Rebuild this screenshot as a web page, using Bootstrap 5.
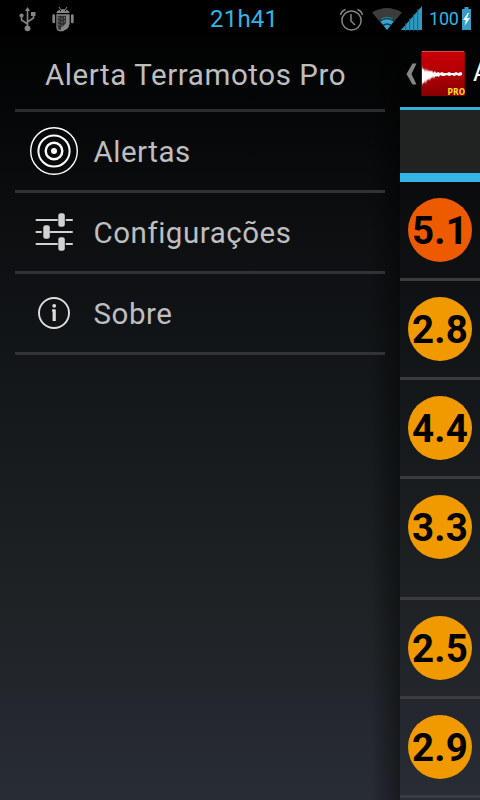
<!DOCTYPE html>
<html lang="pt">
<head>
<meta charset="utf-8">
<meta name="viewport" content="width=device-width, initial-scale=1">
<title>Alerta Terramotos Pro</title>
<link rel="stylesheet" href="https://cdn.jsdelivr.net/npm/bootstrap@5.3.0/dist/css/bootstrap.min.css">
<style>
body{width:480px;height:800px;font-family:Roboto,"Noto Sans",sans-serif;color:#bebebe;background:linear-gradient(#000 0,#020303 60px,#0d0f11 240px,#14181a 400px,#1e2225 600px,#282c34 800px)}
.status-bar{height:38px;background:#000;color:#33b5e5}
.status-bar svg,.drawer svg,.app-bar svg{display:block;flex:none}
.clock{font-size:24px;line-height:40px;letter-spacing:.2px;margin-left:135px;width:70px;white-space:nowrap}
.battery-level{font-size:18px;line-height:40px;width:32px;margin-left:6px;margin-right:1px;letter-spacing:-.2px}
.drawer{width:400px;padding:0 15px;background:linear-gradient(90deg,transparent 370px,rgba(0,0,0,.42) 400px)}
.drawer-title{height:74px;border-bottom:3px solid #2b2d2f;font-size:29.5px;letter-spacing:.58px;line-height:75px;padding-left:30px;white-space:nowrap}
.drawer-item{height:81px;border-bottom:3px solid #303235;font-size:29.5px;letter-spacing:.52px;padding-left:15px}
.drawer-item svg{margin-right:15.5px}
.drawer-item span{padding-top:2px}
.content{width:80px}
.app-bar{height:72px;border-bottom:3px solid #35b0dd;background:#020303;color:#fff;font-size:25px}
.app-bar span{padding-top:1px}
.tab-strip{height:72px;background:#212222;border-bottom:9px solid #33b5e5}
.quake{height:99px;border-bottom:3px solid #3a3c3f;padding:16px 8px;flex:none}
.quake-tall{height:121px}
.magnitude{width:64px;height:64px;background:#f09a00;color:#000;font-size:38.5px;font-weight:700;letter-spacing:.2px;line-height:66px}
.magnitude.strong{background:#ee5a00}
</style>
<script src="https://cdn.jsdelivr.net/npm/bootstrap@5.3.0/dist/js/bootstrap.bundle.min.js"></script>
</head>
<body class="d-flex flex-column overflow-hidden m-0">
<header class="status-bar d-flex align-items-center flex-shrink-0">
  <svg width="75" height="38" fill="none" stroke="#858585" stroke-width="1.600">
    <path d="M27.500 28V10M27.500 24L21.500 20V15M27.500 22L33.500 18V14"/>
    <g fill="#858585" stroke="none"><path d="M27.500 7l2.500 4h-5zM31 12h4.500v4H31z"/><circle cx="21.500" cy="15.500" r="2.100"/><circle cx="27.500" cy="28.300" r="2.900"/></g>
    <path d="M59 7l2 3M67 7l-2 3" stroke-width="1"/>
    <path d="M56.500 13c.3-5 12.700-5 13 0z" fill="#858585" stroke="none"/>
    <path d="M60 10.500h1M65 10.500h1" stroke="#111"/>
    <path d="M53.700 15.500v6.500M72.300 15.500v6.500" stroke-width="2.700" stroke-linecap="round"/>
    <path d="M57 15h12v9l-6 6.500h-4q-2-1-2-3z" fill="#303030" stroke-width="1.300"/>
    <path d="M69 15h-3v8q-2 3-5 4.500v3h3q5-2 5-5z" fill="#858585" stroke="none"/>
    <path d="M59 17v11M62 18v9M64.500 17v7" stroke="#777" stroke-width="1" stroke-dasharray="1.500 2"/>
  </svg>
  <div class="clock">21h41</div>
  <svg width="143" height="38" viewBox="280 0 143 38" fill="none" stroke="#858585" stroke-width="1.500">
    <circle cx="351.500" cy="20.500" r="9.600"/><path d="M351 14v7l4 4M340.500 15q1-4 5-5.500M362.500 15q-1-4-5-5.500"/>
    <path d="M372 12.500q15-9 30 0L387 30z" fill="#3c3c3c" stroke="none"/>
    <path d="M380.500 21.500q6.500-4.500 13 0L387 30z" fill="#33a5d0" stroke="none"/>
    <path d="M380 20.500q7-4.500 14 0M383 25.500q4-3 8 0" stroke="#153844" stroke-width="1.700"/>
    <path d="M381.500 19q5.500-3 11 0" stroke="#318fac" stroke-width="1.200"/>
    <path d="M401 30l21-24v24z" fill="#2f99c2" stroke="none"/>
    <path d="M405.700 23v8M409.700 18v13M413.700 14v17M417.700 9v22" stroke="#1b5e78" stroke-width=".9"/>
  </svg>
  <div class="battery-level">100</div>
  <svg width="9" height="38"><path d="M2.500 7h4v2H9v21H0V9h2.500z" fill="#399cc6"/><path d="M5.800 13L1 20h2.800L2.500 26 8 18H5l2-5z" fill="#e9f7fc"/></svg>
</header>
<main class="d-flex flex-grow-1 overflow-hidden">
  <nav class="drawer flex-shrink-0">
    <div class="drawer-title">Alerta Terramotos Pro</div>
    <div class="drawer-item d-flex align-items-center">
      <svg width="48" height="48" fill="none" stroke="#fff"><circle cx="24" cy="24" r="23.300" stroke-width="1.400"/><circle cx="24" cy="24" r="15.600" stroke-width="2"/><circle cx="24" cy="24" r="8.300" stroke-width="2.400"/><circle cx="24" cy="24" r="3" fill="#fff" stroke="none"/></svg>
      <span>Alertas</span>
    </div>
    <div class="drawer-item d-flex align-items-center">
      <svg width="48" height="48" fill="none" stroke="#d2d2d2" stroke-width="2" stroke-linecap="round"><path d="M6.500 12H27M36.500 12H42M6.500 24H11M20.500 24H42M6.500 36H27M36.500 36H42"/><g fill="#d2d2d2" stroke="none"><rect x="28.300" y="5.300" width="6.500" height="13.400" rx="2.300"/><rect x="13.300" y="17.300" width="6.500" height="13.400" rx="2.300"/><rect x="28.300" y="29.300" width="6.500" height="13.400" rx="2.300"/></g></svg>
      <span>Configurações</span>
    </div>
    <div class="drawer-item d-flex align-items-center">
      <svg width="48" height="48" fill="none" stroke="#dedede"><circle cx="24" cy="24" r="15" stroke-width="1.900"/><path d="M22 21.500h1.500M24 20.500V32" stroke-width="2"/><path d="M24.200 20.500V32" stroke-width="3.200"/><circle cx="24.200" cy="16.800" r="1.900" fill="#dedede" stroke="none"/></svg>
      <span>Sobre</span>
    </div>
  </nav>
  <section class="content d-flex flex-column flex-shrink-0 overflow-hidden">
    <div class="app-bar d-flex align-items-center flex-shrink-0 overflow-hidden">
      <svg width="73" height="69" viewBox="0 0 73 69">
        <defs><linearGradient id="tile" x2="0" y2="1"><stop stop-color="#c90008"/><stop offset=".45" stop-color="#b50005"/><stop offset="1" stop-color="#880002"/></linearGradient></defs>
        <path d="M12.500 25.500h4L11.500 36l5 10.500h-4L6.500 36z" fill="#868686"/>
        <rect x="21.300" y="13" width="43.500" height="45" rx="1" fill="url(#tile)"/>
        <path d="M22 13.500h42" stroke="#df4b50"/>
        <path d="M22 28l1 4 1-2 1 4 1-4 1 4 1-3 1 3 1-2 1 2 1-2 1 3 2-2 1 2 2-1 2 1 2-1 2 1h3l2-1 2 1h3l2-1 2 1 3-1 1 1v2l-3 1-2-1-3 1-2-1-3 1-2-1-3 1h-2l-2-1-1 2-2-1-1 1-1-1-1 3-1-3-1 3-1-2-1 4-1-3-1 3-1-2-1 5-1-4-1 4-1-2-1 4z" fill="#fff"/>
        <text x="47.500" y="56.600" font-family="DejaVu Sans,sans-serif" font-size="8" font-weight="700" textLength="17.500" lengthAdjust="spacingAndGlyphs" fill="#ffdc16">PRO</text>
      </svg>
      <span>A</span>
    </div>
    <div class="tab-strip flex-shrink-0"></div>
    <div class="quake"><div class="magnitude strong rounded-circle text-center">5.1</div></div>
    <div class="quake"><div class="magnitude rounded-circle text-center">2.8</div></div>
    <div class="quake"><div class="magnitude rounded-circle text-center">4.4</div></div>
    <div class="quake quake-tall"><div class="magnitude rounded-circle text-center">3.3</div></div>
    <div class="quake"><div class="magnitude rounded-circle text-center">2.5</div></div>
    <div class="quake"><div class="magnitude rounded-circle text-center">2.9</div></div>
  </section>
</main>
</body>
</html>
